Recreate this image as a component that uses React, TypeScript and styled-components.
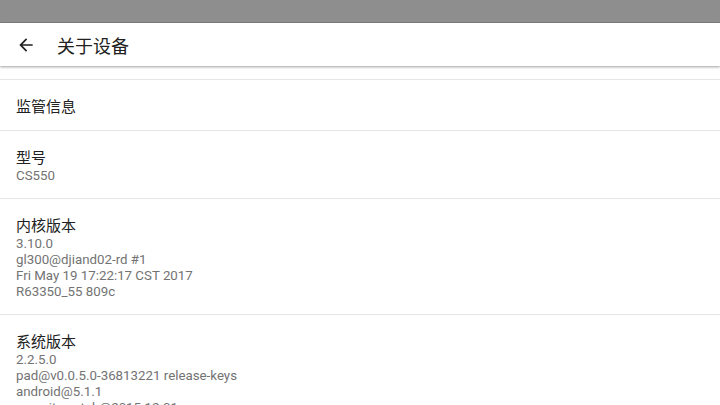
import styled, { createGlobalStyle } from 'styled-components';

const GlobalStyle = createGlobalStyle`
  html, body {
    margin: 0;
    padding: 0;
    background: #ffffff;
    overflow: hidden;
  }
  body {
    font-family: 'Roboto', 'Noto Sans CJK SC', sans-serif;
  }
`;

const Screen = styled.div`
  width: 720px;
  height: 405px;
  display: flex;
  flex-direction: column;
  overflow: hidden;
  background: #ffffff;
`;

const StatusBar = styled.div`
  height: 23px;
  flex-shrink: 0;
  background: #8e8e8e;
  border-bottom: 1px solid #7c7c7c;
  box-sizing: border-box;
`;

const Toolbar = styled.div`
  height: 43px;
  flex-shrink: 0;
  display: flex;
  align-items: center;
  background: #ffffff;
  box-shadow: 0 1px 2px rgba(0, 0, 0, 0.28), 0 2px 3px rgba(0, 0, 0, 0.08);
  position: relative;
  z-index: 1;
`;

const BackButton = styled.div`
  width: 57px;
  height: 43px;
  display: flex;
  align-items: center;
  padding-left: 16px;
  box-sizing: border-box;
  color: #212121;
`;

const Title = styled.div`
  font-size: 18px;
  color: #212121;
  font-family: 'Noto Sans CJK SC', sans-serif;
`;

const List = styled.div`
  display: flex;
  flex-direction: column;
  padding-top: 13px;
`;

const Item = styled.div`
  border-top: 1px solid #e6e6e6;
  padding: 15px 16px 14px;
  display: flex;
  flex-direction: column;
`;

const ItemTitle = styled.div`
  font-family: 'Noto Sans CJK SC', sans-serif;
  font-size: 15px;
  line-height: 21px;
  color: #212121;
`;

const Summary = styled.div`
  font-size: 13.3px;
  line-height: 16px;
  color: #737373;
  margin-top: 1px;
`;

function BackArrow() {
  return (
    <svg width="20" height="20" viewBox="0 0 24 24">
      <path
        d="M20 11H7.83l5.59-5.59L12 4l-8 8 8 8 1.41-1.41L7.83 13H20v-2z"
        fill="currentColor"
      />
    </svg>
  );
}

const items: { title: string; lines: string[] }[] = [
  { title: '监管信息', lines: [] },
  { title: '型号', lines: ['CS550'] },
  {
    title: '内核版本',
    lines: ['3.10.0', 'gl300@djiand02-rd #1', 'Fri May 19 17:22:17 CST 2017', 'R63350_55 809c'],
  },
  {
    title: '系统版本',
    lines: ['2.2.5.0', 'pad@v0.0.5.0-36813221 release-keys', 'android@5.1.1', 'security patch@2015.12.01'],
  },
];

export default function App() {
  return (
    <Screen>
      <GlobalStyle />
      <StatusBar />
      <Toolbar>
        <BackButton>
          <BackArrow />
        </BackButton>
        <Title>关于设备</Title>
      </Toolbar>
      <List>
        {items.map((it) => (
          <Item key={it.title}>
            <ItemTitle>{it.title}</ItemTitle>
            {it.lines.length > 0 && (
              <Summary>
                {it.lines.map((l) => (
                  <div key={l}>{l}</div>
                ))}
              </Summary>
            )}
          </Item>
        ))}
      </List>
    </Screen>
  );
}
